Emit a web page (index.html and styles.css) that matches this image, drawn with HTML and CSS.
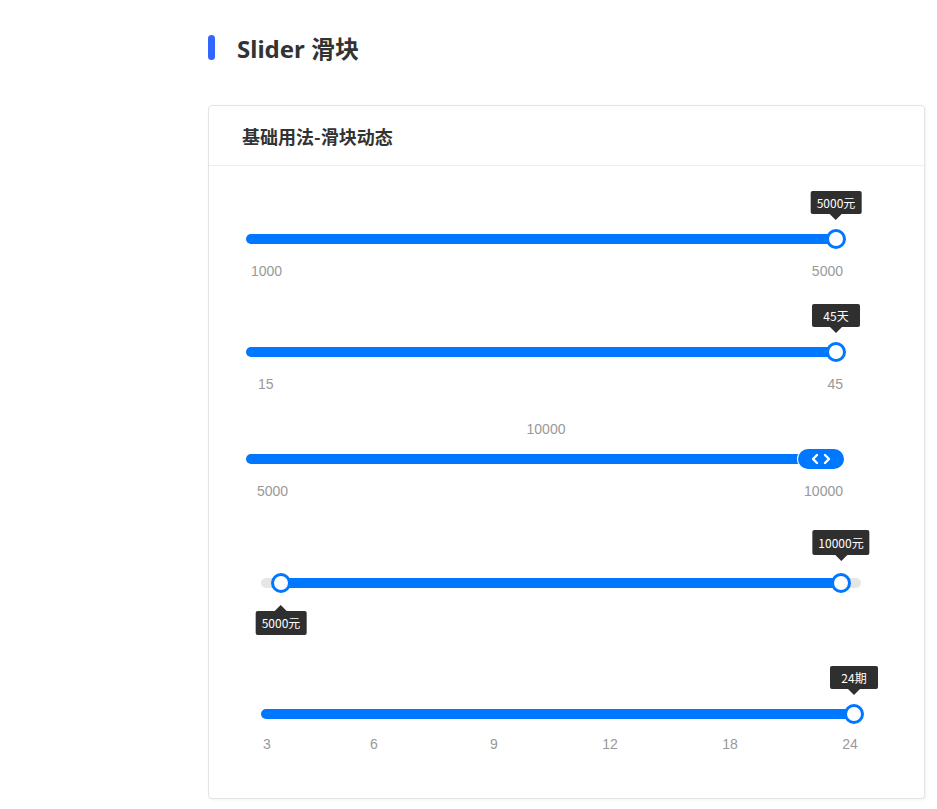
FILE: index.html
```html
<!DOCTYPE html>
<html lang="zh-CN">
<head>
<meta charset="utf-8">
<title>Slider 滑块</title>
<link rel="stylesheet" href="styles.css">
</head>
<body>
<div class="page">
  <h1 class="page-title"><span class="title-bar"></span>Slider 滑块</h1>
  <div class="card">
    <div class="card-header">基础用法-滑块动态</div>
    <div class="card-body">
      <div class="slider s1">
        <div class="track-row w590">
          <div class="fill" style="width:100%"></div>
          <div class="thumb" style="left:100%"><div class="tip tip-up">5000元</div></div>
        </div>
        <div class="labels w597"><span class="lab1">1000</span><span>5000</span></div>
      </div>

      <div class="slider s2">
        <div class="track-row w590">
          <div class="fill" style="width:100%"></div>
          <div class="thumb" style="left:100%"><div class="tip tip-up">45天</div></div>
        </div>
        <div class="labels w597"><span class="lab2">15</span><span>45</span></div>
      </div>

      <div class="slider s3">
        <div class="value-label">10000</div>
        <div class="track-row w575">
          <div class="fill" style="width:100%"></div>
          <div class="pill" style="left:100%">
            <svg width="24" height="14" viewBox="0 0 24 14"><path d="M8 3 L4 7 L8 11" fill="none" stroke="#fff" stroke-width="2.4" stroke-linecap="round" stroke-linejoin="round"/><path d="M16 3 L20 7 L16 11" fill="none" stroke="#fff" stroke-width="2.4" stroke-linecap="round" stroke-linejoin="round"/></svg>
          </div>
        </div>
        <div class="labels w597"><span class="lab3">5000</span><span>10000</span></div>
      </div>

      <div class="slider s4">
        <div class="track-row w600">
          <div class="rail"></div>
          <div class="fill" style="left:20px;width:560px"></div>
          <div class="thumb" style="left:20px"><div class="tip tip-down">5000元</div></div>
          <div class="thumb" style="left:580px"><div class="tip tip-up tip-hi">10000元</div></div>
        </div>
      </div>

      <div class="slider s5">
        <div class="track-row w593">
          <div class="fill" style="width:100%"></div>
          <div class="thumb" style="left:100%"><div class="tip tip-up">24期</div></div>
        </div>
        <div class="marks">
          <span class="mark" style="left:6px">3</span>
          <span class="mark" style="left:113px">6</span>
          <span class="mark" style="left:233px">9</span>
          <span class="mark" style="left:349px">12</span>
          <span class="mark" style="left:469px">18</span>
          <span class="mark" style="left:589px">24</span>
        </div>
      </div>
    </div>
  </div>
</div>
</body>
</html>
```

FILE: styles.css
```css
* { box-sizing: border-box; }
html, body { margin: 0; padding: 0; background: #fff; }
body {
  font-family: "Liberation Sans", Arial, "Noto Sans CJK SC", sans-serif;
  color: #333;
}
.page {
  padding: 32px 12px 12px 208px;
}
.page-title {
  display: flex;
  align-items: center;
  margin: 0;
  height: 30px;
  font-family: "Noto Sans", "Noto Sans CJK SC", sans-serif;
  font-size: 24px;
  font-weight: 700;
  color: #333;
}
.title-bar {
  width: 7px;
  height: 25px;
  background: #3366ff;
  border-radius: 4px;
  margin-right: 22px;
}
.card {
  margin-top: 43px;
  width: 717px;
  border: 1px solid #e4e4e4;
  border-radius: 4px;
  box-shadow: 1px 1px 3px rgba(0,0,0,0.06);
  background: #fff;
}
.card-header {
  height: 60px;
  padding-left: 33px;
  display: flex;
  align-items: center;
  border-bottom: 1px solid #eeeeee;
  font-family: "Noto Sans CJK SC", sans-serif;
  font-size: 18px;
  font-weight: 700;
  color: #333;
}
.card-body {
  padding: 0 0 44px 0;
}
.slider { position: relative; }
.s1 { margin-top: 63px; padding-left: 37px; }
.s2 { margin-top: 61px; padding-left: 37px; }
.s3 { margin-top: 25px; padding-left: 37px; }
.s4 { margin-top: 72px; padding-left: 52px; }
.s5 { margin-top: 111px; padding-left: 52px; }

.track-row {
  position: relative;
  height: 20px;
}
.w590 { width: 590px; }
.w575 { width: 575px; }
.w600 { width: 600px; }
.w593 { width: 593px; }
.rail {
  position: absolute;
  left: 0; right: 0; top: 5px;
  height: 10px;
  border-radius: 5px;
  background: #e6e6e6;
}
.fill {
  position: absolute;
  left: 0; top: 5px;
  height: 10px;
  border-radius: 5px;
  background: #0077ff;
}
.thumb {
  position: absolute;
  top: 0;
  width: 20px;
  height: 20px;
  margin-left: -10px;
  border-radius: 50%;
  border: 3px solid #0077ff;
  background: #fff;
}
.pill {
  position: absolute;
  top: 0;
  width: 46px;
  height: 20px;
  margin-left: -23px;
  border-radius: 10px;
  background: #0077ff;
  display: flex;
  align-items: center;
  justify-content: center;
  box-shadow: 0 0 0 1px #fff;
}
.pill svg { display: block; }
.tip {
  position: absolute;
  left: 50%;
  transform: translateX(-50%);
  white-space: nowrap;
  min-width: 48px;
  text-align: center;
  height: 23px;
  line-height: 23px;
  padding: 0 6px;
  border-radius: 2px;
  background: #2f2f2f;
  color: #fff;
  font-family: "Noto Sans CJK SC", sans-serif;
  font-size: 12px;
}
.tip::after {
  content: "";
  position: absolute;
  left: 50%;
  margin-left: -6px;
  border: 6px solid transparent;
}
.tip-up { bottom: 32px; }
.tip-hi { bottom: 35px; height: 25px; line-height: 25px; }
.tip-up::after { top: 100%; border-top-color: #2f2f2f; }
.tip-down { top: 35px; height: 24px; line-height: 24px; }
.tip-down::after { bottom: 100%; border-bottom-color: #2f2f2f; }

.labels {
  display: flex;
  justify-content: space-between;
  margin-top: 12px;
  height: 20px;
  line-height: 20px;
  font-size: 14px;
  color: #999;
}
.w597 { width: 597px; }
.lab1 { margin-left: 5px; }
.lab2 { margin-left: 12px; }
.lab3 { margin-left: 11px; }
.value-label {
  width: 600px;
  text-align: center;
  font-size: 14px;
  color: #999;
  height: 20px;
  line-height: 20px;
  margin-bottom: 10px;
}
.marks {
  position: relative;
  width: 600px;
  height: 20px;
  margin-top: 10px;
  font-size: 14px;
  line-height: 20px;
  color: #999;
}
.mark {
  position: absolute;
  top: 0;
  transform: translateX(-50%);
}
```
